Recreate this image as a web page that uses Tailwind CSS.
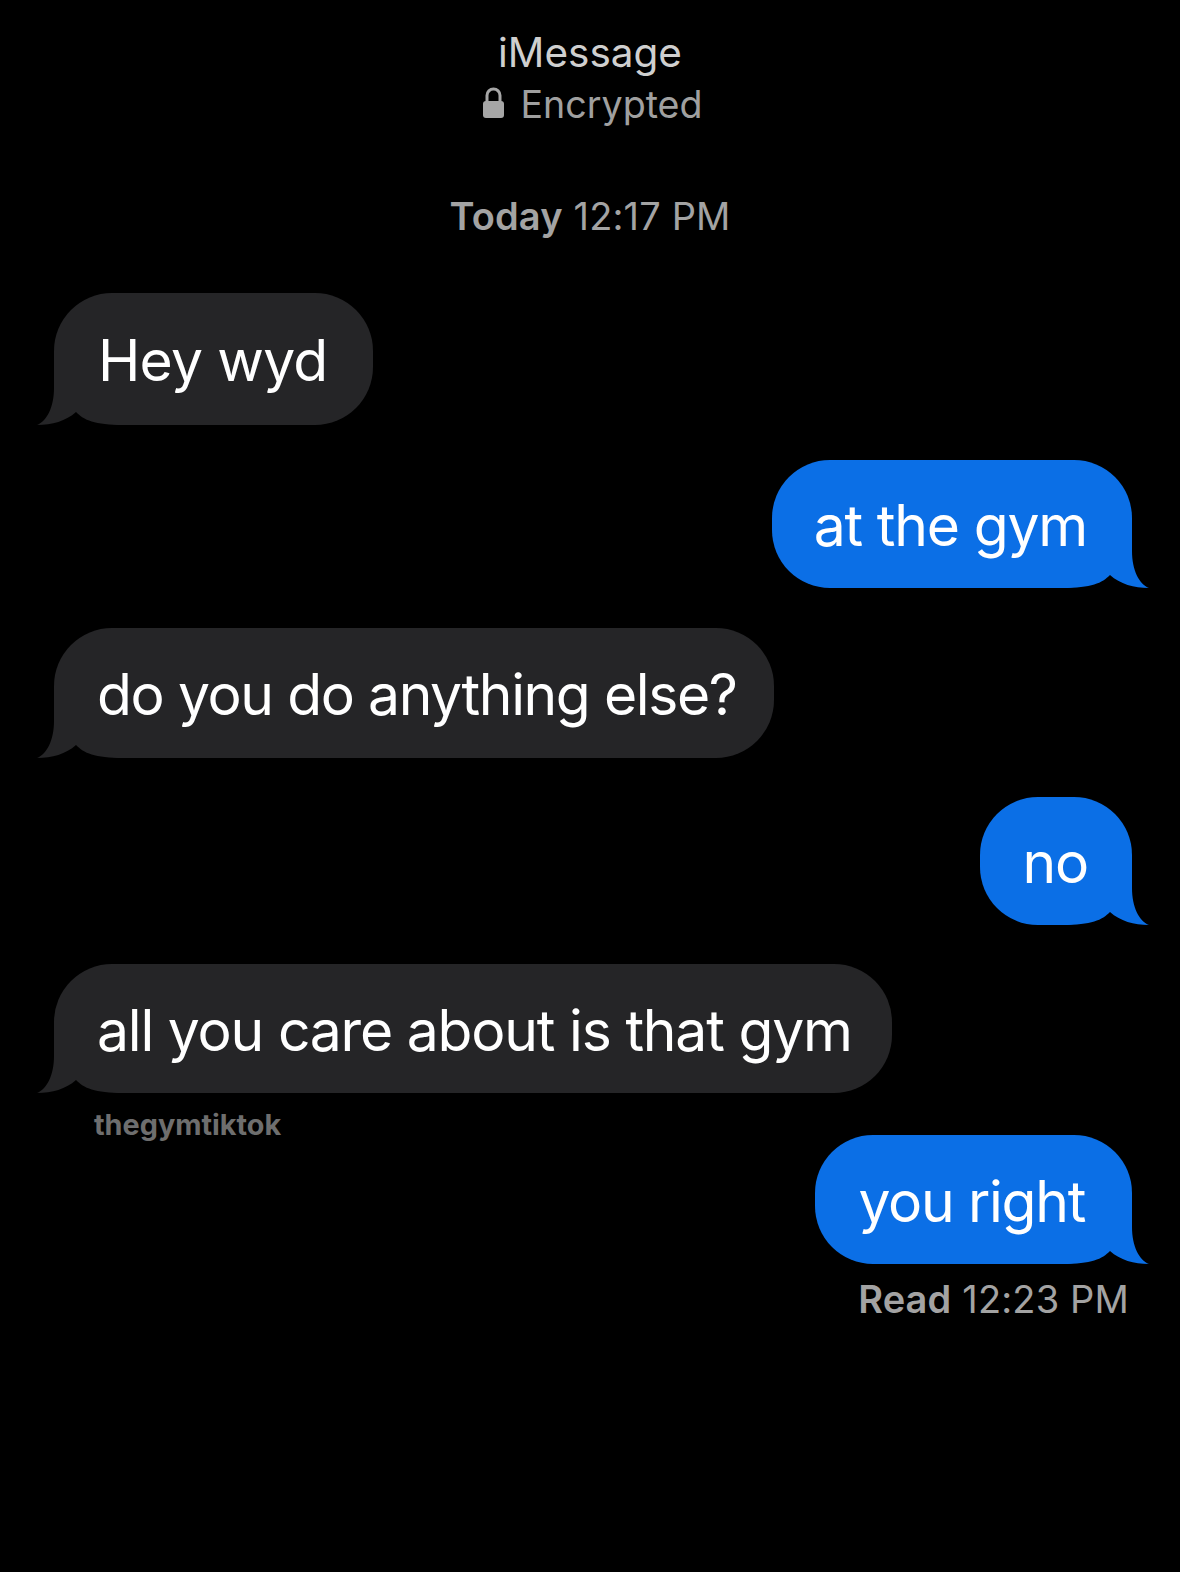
<!DOCTYPE html>
<html lang="en">
<head>
  <meta charset="UTF-8" />
  <title>iMessage</title>
  <script src="https://cdn.jsdelivr.net/npm/@tailwindcss/browser@4"></script>
</head>
<body class="bg-black">
  <div class="w-[1180px] h-[1572px] overflow-hidden bg-black font-['Inter',sans-serif] flex flex-col">

    <div class="flex flex-col items-center pt-[30px]">
      <div class="h-[46px] text-[40.5px] leading-[46px] text-[#cfcfcf]">iMessage</div>
      <div class="flex items-center gap-[16px] ml-[4px] mt-[1px] h-[56px] text-[37.6px] text-[#a0a0a0]">
        <svg width="23" height="32" viewBox="0 0 23 32" class="mt-[-4px]">
          <path d="M5 15V8.5a6.5 6.5 0 0 1 13 0V15" fill="none" stroke="#a6a6a6" stroke-width="3"/>
          <rect x="1" y="14" width="21" height="17" rx="3" fill="#a6a6a6"/>
        </svg>
        <span>Encrypted</span>
      </div>
      <div class="mt-[61px] h-[44px] leading-[44px] text-[38px] tracking-[0.15px] text-[#a3a3a3]"><span class="font-semibold">Today</span> 12:17 PM</div>
    </div>

    <div class="flex flex-col px-[48px] pt-[55px] text-[57px] tracking-[-1.2px] text-white">
      <div class="relative self-start ml-[6px] h-[132px] flex items-center pt-[4px] pl-[44px] pr-[46px] rounded-[58px] rounded-bl-[70px] bg-[#252527] tracking-[-0.8px]">
        <span class="relative z-10">Hey wyd</span>
        <svg width="90" height="70" viewBox="0 0 90 70" class="absolute left-[-16px] bottom-0 overflow-visible"><path d="M16 0L16 33C16 52 9 66 -1 70C14 70 28 66 38 57C46 65 56 70 86 70L86 0Z" fill="#252527"/></svg>
      </div>

      <div class="relative self-end h-[128px] flex items-center pt-[4px] pl-[42px] pr-[45px] rounded-[58px] rounded-br-[70px] bg-[#0b6fe6] mt-[35px]">
        <span class="relative z-10">at the gym</span>
        <svg width="90" height="70" viewBox="0 0 90 70" class="absolute right-[-16px] bottom-0 -scale-x-100 overflow-visible"><path d="M16 0L16 33C16 52 9 66 -1 70C14 70 28 66 38 57C46 65 56 70 86 70L86 0Z" fill="#0b6fe6"/></svg>
      </div>

      <div class="relative self-start ml-[6px] h-[130px] flex items-center pt-[4px] pl-[43px] pr-[37px] rounded-[58px] rounded-bl-[70px] bg-[#252527] tracking-[-1.4px] mt-[40px]">
        <span class="relative z-10">do you do anything else?</span>
        <svg width="90" height="70" viewBox="0 0 90 70" class="absolute left-[-16px] bottom-0 overflow-visible"><path d="M16 0L16 33C16 52 9 66 -1 70C14 70 28 66 38 57C46 65 56 70 86 70L86 0Z" fill="#252527"/></svg>
      </div>

      <div class="relative self-end h-[128px] flex items-center pt-[4px] pl-[43px] pr-[44px] rounded-[58px] rounded-br-[70px] bg-[#0b6fe6] mt-[39px]">
        <span class="relative z-10">no</span>
        <svg width="90" height="70" viewBox="0 0 90 70" class="absolute right-[-16px] bottom-0 -scale-x-100 overflow-visible"><path d="M16 0L16 33C16 52 9 66 -1 70C14 70 28 66 38 57C46 65 56 70 86 70L86 0Z" fill="#0b6fe6"/></svg>
      </div>

      <div class="relative self-start ml-[6px] h-[129px] flex items-center pt-[4px] pl-[43px] pr-[40px] rounded-[58px] rounded-bl-[70px] bg-[#252527] mt-[39px]">
        <span class="relative z-10">all you care about is that gym</span>
        <svg width="90" height="70" viewBox="0 0 90 70" class="absolute left-[-16px] bottom-0 overflow-visible"><path d="M16 0L16 33C16 52 9 66 -1 70C14 70 28 66 38 57C46 65 56 70 86 70L86 0Z" fill="#252527"/></svg>
      </div>

      <div class="flex justify-between items-start">
        <div class="ml-[46px] mt-[14px] text-[28.8px] leading-[36px] tracking-normal font-bold text-[#6e6e6e]">thegymtiktok</div>
        <div class="relative h-[129px] flex items-center pt-[4px] pl-[43px] pr-[47px] rounded-[58px] rounded-br-[70px] bg-[#0b6fe6] tracking-[-1.3px] mt-[42px]">
          <span class="relative z-10">you right</span>
          <svg width="90" height="70" viewBox="0 0 90 70" class="absolute right-[-16px] bottom-0 -scale-x-100 overflow-visible"><path d="M16 0L16 33C16 52 9 66 -1 70C14 70 28 66 38 57C46 65 56 70 86 70L86 0Z" fill="#0b6fe6"/></svg>
        </div>
      </div>

      <div class="self-end mr-[3px] mt-[13px] h-[44px] leading-[44px] text-[38px] tracking-[0.15px] text-[#a3a3a3]"><span class="font-semibold">Read</span> 12:23 PM</div>
    </div>

  </div>
</body>
</html>
